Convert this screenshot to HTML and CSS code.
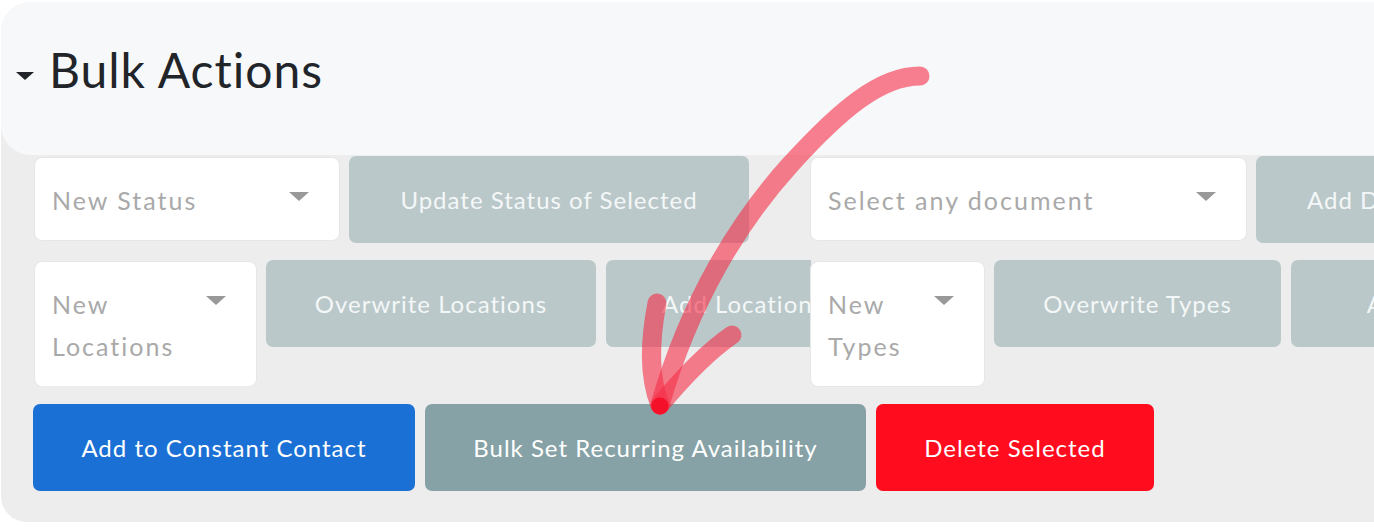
FILE: index.html
```html
<!DOCTYPE html>
<html lang="en">
<head>
<meta charset="utf-8">
<title>Bulk Actions</title>
<link rel="stylesheet" href="styles.css">
</head>
<body>
<div class="panel">
  <div class="header">
    <span class="title-caret"></span>
    <h2 class="title">Bulk Actions</h2>
  </div>
  <div class="body">
    <div class="cols">
      <div class="col col-left">
        <div class="row">
          <div class="select sel-status"><span class="label">New Status</span><span class="caret"></span></div>
          <button class="btn btn-muted w-update">Update Status of Selected</button>
        </div>
        <div class="row">
          <div class="select sel-locations"><span class="label">New Locations</span><span class="caret"></span></div>
          <button class="btn btn-muted w-owloc">Overwrite Locations</button>
          <button class="btn btn-muted w-addloc">Add Locations</button>
        </div>
      </div>
      <div class="col col-right">
        <div class="row">
          <div class="select sel-doc"><span class="label">Select any document</span><span class="caret"></span></div>
          <button class="btn btn-muted w-adddoc">Add Document</button>
        </div>
        <div class="row">
          <div class="select sel-types"><span class="label">New Types</span><span class="caret"></span></div>
          <button class="btn btn-muted w-owtypes">Overwrite Types</button>
          <button class="btn btn-muted w-addtypes">Add Types</button>
        </div>
      </div>
    </div>
    <div class="row row-actions">
      <button class="btn btn-blue w-cc">Add to Constant Contact</button>
      <button class="btn btn-slate w-bulk">Bulk Set Recurring Availability</button>
      <button class="btn btn-red w-del">Delete Selected</button>
    </div>
  </div>
</div>
<svg class="annotation" width="1374" height="528" viewBox="0 0 1374 528" xmlns="http://www.w3.org/2000/svg">
  <g fill="none" stroke="rgb(245,45,70)" stroke-opacity="0.6" stroke-width="19" stroke-linecap="round" stroke-linejoin="round">
    <path d="M920 76 C880 76 840 110 790 165 C740 220 690 300 660 405"/>
    <path d="M657 303 C650 340 648 375 660 405"/>
    <path d="M732 335 C710 350 685 375 660 405"/>
  </g>
  <circle cx="660" cy="406" r="8.5" fill="#f5102a"/>
</svg>
</body>
</html>
```
FILE: styles.css
```css
html, body {
  margin: 0;
  padding: 0;
  background: #ffffff;
  overflow: hidden;
}

body {
  font-family: "Lato", "Noto Sans", sans-serif;
  width: 1374px;
  height: 528px;
  position: relative;
}

.panel {
  margin: 2px 0 0 1px;
  width: 1480px;
  height: 520px;
  background: #ededed;
  border-radius: 30px 30px 26px 26px;
}

.header {
  box-sizing: border-box;
  height: 153px;
  background: #f7f8fa;
  border-radius: 30px;
  display: flex;
  align-items: flex-start;
  padding: 44px 0 0 15px;
}

.title-caret {
  width: 0;
  height: 0;
  margin-top: 26px;
  border-left: 9px solid transparent;
  border-right: 9px solid transparent;
  border-top: 8px solid #212529;
}

.title {
  margin: 0 0 0 15px;
  font-size: 48px;
  line-height: 48px;
  font-weight: 400;
  color: #212529;
  letter-spacing: 1px;
}

.body {
  padding: 1px 0 0 32px;
}

.cols {
  display: grid;
  grid-template-columns: 778px auto;
}

.col {
  display: flex;
  flex-direction: column;
  gap: 17px;
}

.col-left {
  overflow: hidden;
}

.row {
  display: flex;
  align-items: flex-start;
  gap: 10px;
  flex-wrap: nowrap;
}

.row-actions {
  margin-top: 18px;
}

.select {
  box-sizing: border-box;
  flex-shrink: 0;
  display: flex;
  align-items: flex-start;
  margin-top: 2px;
  padding: 21px 30px 19px 17px;
  background: #ffffff;
  border-radius: 7px;
  box-shadow: 0 0 0 1px #e6e6e6;
  font-size: 25px;
  line-height: 42px;
  letter-spacing: 2px;
  color: #a9a9a9;
}

.col-left .select {
  margin-left: 2px;
}

.select .label {
  flex: 1;
  min-width: 0;
}

.select .caret {
  flex-shrink: 0;
  width: 0;
  height: 0;
  margin: 13px 0 0 16px;
  border-left: 10px solid transparent;
  border-right: 10px solid transparent;
  border-top: 9px solid #999999;
}

.sel-status { width: 304px; }
.sel-locations { width: 221px; }
.sel-doc { width: 435px; }
.sel-types { width: 173px; }

.btn {
  box-sizing: border-box;
  flex-shrink: 0;
  height: 87px;
  border: 0;
  border-radius: 7px;
  padding: 0;
  font-family: inherit;
  font-size: 24px;
  letter-spacing: 1px;
  text-align: center;
  white-space: nowrap;
  overflow: hidden;
}

.btn-muted {
  background: #bac8ca;
  color: #f4f7f7;
}

.btn-blue {
  background: #1a70d4;
  color: #ffffff;
}

.btn-slate {
  background: #86a2a6;
  color: #ffffff;
}

.btn-red {
  background: #ff0d1e;
  color: #ffffff;
}

.w-update { width: 400px; }
.w-owloc { width: 330px; }
.w-addloc { width: 274px; }
.w-adddoc { width: 274px; }
.w-owtypes { width: 287px; }
.w-addtypes { width: 270px; }
.w-cc { width: 382px; }
.w-bulk { width: 441px; }
.w-del { width: 278px; }

.annotation {
  position: absolute;
  top: 0;
  left: 0;
  pointer-events: none;
}
```
